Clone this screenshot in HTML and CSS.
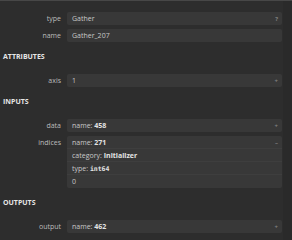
FILE: index.html
```html
<!DOCTYPE html>
<html>
<head>
<meta charset="utf-8">
<link rel="stylesheet" href="styles.css">
</head>
<body>
<div class="frame">
  <div class="panel">
    <div class="row">
      <div class="label">type</div>
      <div class="value"><div class="line">Gather</div><span class="icon">?</span></div>
    </div>
    <div class="row">
      <div class="label">name</div>
      <div class="value"><div class="line">Gather_207</div></div>
    </div>
    <div class="heading">ATTRIBUTES</div>
    <div class="row">
      <div class="label">axis</div>
      <div class="value"><div class="line">1</div><span class="icon">+</span></div>
    </div>
    <div class="heading">INPUTS</div>
    <div class="row">
      <div class="label">data</div>
      <div class="value"><div class="line">name: <b>458</b></div><span class="icon">+</span></div>
    </div>
    <div class="row">
      <div class="label">indices</div>
      <div class="value">
        <div class="line">name: <b>271</b></div>
        <div class="line sep">category: <b>Initializer</b></div>
        <div class="line sep">type: <code>int64</code></div>
        <div class="line sep">0</div>
        <span class="icon">&#8211;</span>
      </div>
    </div>
    <div class="heading">OUTPUTS</div>
    <div class="row">
      <div class="label">output</div>
      <div class="value"><div class="line">name: <b>462</b></div><span class="icon">+</span></div>
    </div>
  </div>
  <div class="strip"></div>
</div>
</body>
</html>
```
FILE: styles.css
```css
html, body {
  margin: 0;
  padding: 0;
  background: #2d2d2d;
}
body {
  font-family: "Open Sans", "Noto Sans", sans-serif;
  font-size: 7px;
  color: #c8c8c8;
}
.frame {
  display: grid;
  grid-template-columns: 1fr 9px;
  height: 240px;
  border-top: 1px solid #474747;
  box-sizing: border-box;
}
.panel {
  display: flex;
  flex-direction: column;
  padding: 11px 1px 0 3px;
}
.strip {
  background: #2a2a2a;
}
.row {
  display: grid;
  grid-template-columns: 58px 1fr;
  column-gap: 6px;
  margin-bottom: 4px;
}
.label {
  text-align: right;
  line-height: 13px;
  color: #bcbcbc;
}
.value {
  position: relative;
  background: #383838;
  border-radius: 2px;
}
.line {
  padding: 2.5px 5px;
  line-height: 8px;
  white-space: nowrap;
}
.line.sep {
  border-top: 1px solid rgba(255,255,255,0.03);
  margin-top: -1px;
}
.value b {
  color: #e4e4e4;
  font-weight: bold;
}
.value code {
  font-family: "DejaVu Sans Mono", monospace;
  font-size: 6.5px;
  font-weight: bold;
  color: #e4e4e4;
}
.icon {
  position: absolute;
  top: 2.5px;
  right: 4px;
  line-height: 8px;
  font-size: 6px;
  font-weight: bold;
  color: #808080;
}
.heading {
  margin-top: 7px;
  margin-bottom: 13px;
  line-height: 8px;
  font-weight: bold;
  color: #e6e6e6;
}
```
